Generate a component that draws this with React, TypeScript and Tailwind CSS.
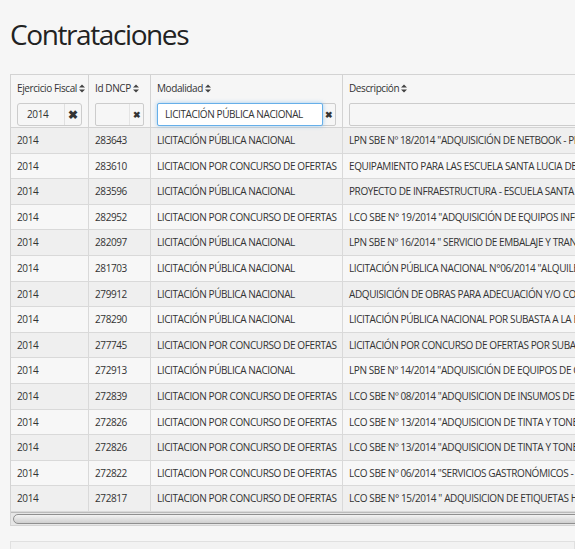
import React from "react";

const rows: [string, string, string, string][] = [
  ["2014", "283643", "LICITACIÓN PÚBLICA NACIONAL", "LPN SBE Nº 18/2014 \"ADQUISICIÓN DE NETBOOK - PROGRAMA"],
  ["2014", "283610", "LICITACION POR CONCURSO DE OFERTAS", "EQUIPAMIENTO PARA LAS ESCUELA SANTA LUCIA DE"],
  ["2014", "283596", "LICITACIÓN PÚBLICA NACIONAL", "PROYECTO DE INFRAESTRUCTURA - ESCUELA SANTA LUCIA"],
  ["2014", "282952", "LICITACION POR CONCURSO DE OFERTAS", "LCO SBE N° 19/2014 \"ADQUISICIÓN DE EQUIPOS INFORMÁTICOS"],
  ["2014", "282097", "LICITACIÓN PÚBLICA NACIONAL", "LPN SBE Nº 16/2014 \" SERVICIO DE EMBALAJE Y TRANSPORTE"],
  ["2014", "281703", "LICITACIÓN PÚBLICA NACIONAL", "LICITACIÓN PÚBLICA NACIONAL N°06/2014 \"ALQUILER"],
  ["2014", "279912", "LICITACIÓN PÚBLICA NACIONAL", "ADQUISICIÓN DE OBRAS PARA ADECUACIÓN Y/O CONSTRUCCIÓN"],
  ["2014", "278290", "LICITACIÓN PÚBLICA NACIONAL", "LICITACIÓN PÚBLICA NACIONAL POR SUBASTA A LA BAJA"],
  ["2014", "277745", "LICITACION POR CONCURSO DE OFERTAS", "LICITACIÓN POR CONCURSO DE OFERTAS POR SUBASTA"],
  ["2014", "272913", "LICITACIÓN PÚBLICA NACIONAL", "LPN SBE Nº 14/2014 \"ADQUISICIÓN DE EQUIPOS DE COMPUTACIÓN"],
  ["2014", "272839", "LICITACION POR CONCURSO DE OFERTAS", "LCO SBE Nº 08/2014 \"ADQUISICION DE INSUMOS DE OFICINA"],
  ["2014", "272826", "LICITACION POR CONCURSO DE OFERTAS", "LCO SBE Nº 13/2014 \"ADQUISICION DE TINTA Y TONER"],
  ["2014", "272826", "LICITACION POR CONCURSO DE OFERTAS", "LCO SBE Nº 13/2014 \"ADQUISICION DE TINTA Y TONER"],
  ["2014", "272822", "LICITACION POR CONCURSO DE OFERTAS", "LCO SBE Nº 06/2014 \"SERVICIOS GASTRONÓMICOS - TIPO"],
  ["2014", "272817", "LICITACION POR CONCURSO DE OFERTAS", "LCO SBE N° 15/2014 \" ADQUISICION DE ETIQUETAS HOLOGRÁFICAS"],
];

function SortIcon() {
  return (
    <svg width="6" height="9" viewBox="0 0 6 9" className="ml-[2px] inline-block shrink-0">
      <path d="M0 3.6 L3 0.4 L6 3.6 Z M0 5.4 L3 8.6 L6 5.4 Z" fill="#444" />
    </svg>
  );
}

const cols = ["w-[78px]", "w-[62px]", "w-[192px]", "w-[400px]"];

export default function App() {
  return (
    <div className="min-h-[549px] w-[575px] overflow-hidden bg-[#f6f6f6] font-['Open_Sans',sans-serif] text-[#333]">
      <h1 className="pl-[10px] pt-[14px] text-[28px] font-medium leading-[40px] tracking-[-1.4px] text-[#222]">Contrataciones</h1>

      <div className="ml-[10px] mt-[20px] w-[600px] border border-[#d3d3d3] bg-[#f6f6f6] tracking-[-0.4px]">
        {/* header */}
        <div className="flex h-[53px] border-b border-[#d3d3d3] whitespace-nowrap">
          <div className={`${cols[0]} shrink-0 border-r border-[#d3d3d3] px-[6px] pt-[6px]`}>
            <div className="flex items-center text-[10px] font-medium leading-[14px]">Ejercicio Fiscal<SortIcon /></div>
            <div className="mt-[8px] flex h-[23px] items-center rounded-[3px] border border-[#ccc] bg-[#f6f6f6]">
              <span className="flex-1 pl-[9px] text-[10px]">2014</span>
              <span className="flex h-full w-[17px] items-center justify-center border-l border-[#e0e0e0] text-[12px] font-bold text-[#333]">✖</span>
            </div>
          </div>
          <div className={`${cols[1]} shrink-0 border-r border-[#d3d3d3] px-[6px] pt-[6px]`}>
            <div className="flex items-center text-[10px] font-medium leading-[14px]">Id DNCP<SortIcon /></div>
            <div className="mt-[8px] flex h-[23px] items-center rounded-[2px] border border-[#ccc] bg-[#f6f6f6]">
              <span className="flex-1" />
              <span className="flex h-full w-[14px] items-center justify-center border-l border-[#e4e4e4] text-[9px] font-bold text-[#333]">✖</span>
            </div>
          </div>
          <div className={`${cols[2]} shrink-0 border-r border-[#d3d3d3] px-[6px] pt-[6px]`}>
            <div className="flex items-center text-[10px] font-medium leading-[14px]">Modalidad<SortIcon /></div>
            <div className="mt-[8px] flex h-[23px] items-center rounded-[2px] border border-[#ccc] bg-[#f6f6f6]">
              <span className="-my-px -ml-px flex h-[23px] flex-1 items-center rounded-[2px] border border-[#66afe9] bg-white pl-[7px] text-[10px] shadow-[0_0_4px_rgba(102,175,233,0.6)]">LICITACIÓN PÚBLICA NACIONAL</span>
              <span className="flex h-full w-[12px] items-center justify-center text-[9px] font-bold text-[#333]">✖</span>
            </div>
          </div>
          <div className={`${cols[3]} shrink-0 px-[6px] pt-[6px]`}>
            <div className="flex items-center text-[10px] font-medium leading-[14px]">Descripción<SortIcon /></div>
            <div className="mt-[8px] h-[23px] rounded-[2px] border border-[#ccc] bg-[#f6f6f6]" />
          </div>
        </div>

        {/* body */}
        {rows.map((r, i) => (
          <div
            key={i}
            className={`flex h-[25.6px] border-b border-[#d9d9d9] text-[10px] ${i % 2 === 0 ? "bg-[#efefef]" : "bg-[#f7f7f7]"}`}
          >
            {r.map((c, j) => (
              <div
                key={j}
                className={`${cols[j]} shrink-0 overflow-hidden whitespace-nowrap px-[6px] leading-[24.6px] ${j < 3 ? "border-r border-[#d9d9d9]" : ""}`}
              >
                {c}
              </div>
            ))}
          </div>
        ))}

        {/* scrollbar */}
        <div className="h-[13px] border-t border-[#bbb] bg-[#e6e6e6] px-[2px] pt-[1px]">
          <div className="h-[10px] rounded-full border border-[#8f8f8f] bg-gradient-to-b from-[#f3f3f3] to-[#cfcfcf]" />
        </div>
      </div>

      <div className="ml-[10px] mt-[15px] h-[20px] border border-[#e0e0e0] bg-[#f2f2f2]" />
    </div>
  );
}
